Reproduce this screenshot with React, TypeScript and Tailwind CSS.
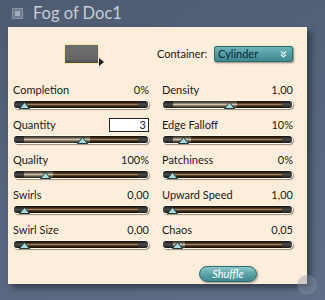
import { useState } from 'react';

type Row = { label: string; value: string; pos: number; fill: number; input?: boolean };

const left: Row[] = [
  { label: 'Completion', value: '0%', pos: 10, fill: 0 },
  { label: 'Quantity', value: '3', pos: 68, fill: 68, input: true },
  { label: 'Quality', value: '100%', pos: 31, fill: 31 },
  { label: 'Swirls', value: '0,00', pos: 10, fill: 0 },
  { label: 'Swirl Size', value: '0,00', pos: 10, fill: 0 },
];

const right: Row[] = [
  { label: 'Density', value: '1,00', pos: 66, fill: 66 },
  { label: 'Edge Falloff', value: '10%', pos: 20, fill: 20 },
  { label: 'Patchiness', value: '0%', pos: 9, fill: 0 },
  { label: 'Upward Speed', value: '1,00', pos: 9, fill: 0 },
  { label: 'Chaos', value: '0,05', pos: 14, fill: 14 },
];

function Slider({ pos, fill }: { pos: number; fill: number }) {
  return (
    <div className="relative mt-[3px] h-[9px] rounded-full border border-[#fffaf0] bg-[linear-gradient(to_bottom,#1a0f06,#3b2714_30%,#9c825f_50%,#3b2714_70%,#140b04)] shadow-[1px_1px_1px_rgba(60,40,20,0.5)]">
      <div
        className="absolute left-[8px] top-0 h-full bg-[linear-gradient(to_bottom,#2a241c,#6f6556_30%,#d2c4aa_50%,#6f6556_70%,#221d16)]"
        style={{ width: fill }}
      />
      <div className="absolute left-0 top-0 h-full w-[10px] rounded-l-full bg-[linear-gradient(to_bottom,#151515,#4a4a4a_50%,#1a1a1a)]" />
      <div className="absolute right-0 top-0 h-full w-[10px] rounded-r-full bg-[linear-gradient(to_bottom,#151515,#4a4a4a_50%,#1a1a1a)]" />
      <svg
        className="absolute top-[1px]"
        style={{ left: pos - 5 }}
        width="11"
        height="7"
        viewBox="0 0 11 7"
      >
        <polygon points="5.5,0.5 10.5,6.5 0.5,6.5" fill="#a8dcdc" stroke="#1d3a40" strokeWidth="1" />
      </svg>
    </div>
  );
}

function Cell({ row }: { row: Row }) {
  return (
    <div className="h-[35px]">
      <div className="flex h-[14px] items-center justify-between">
        <span>{row.label}</span>
        {row.input ? (
          <div className="flex h-[14px] w-[40px] items-center justify-end border border-[#222] bg-white pr-[2px]">
            {row.value}
          </div>
        ) : (
          <span>{row.value}</span>
        )}
      </div>
      <Slider pos={row.pos} fill={row.fill} />
    </div>
  );
}

export default function App() {
  const [container] = useState('Cylinder');

  return (
    <div
      className="relative h-[300px] w-[325px] overflow-hidden bg-[linear-gradient(160deg,#4e5b71,#56657d_50%,#5e6e86)] text-[11px] text-[#1a1a1a]"
      style={{ fontFamily: 'Lato, sans-serif' }}
    >
      <div className="flex h-[27px] items-center pl-[12px]">
        <div className="flex h-[11px] w-[11px] items-center justify-center bg-[#6f7a8c] shadow-[inset_0_0_0_1px_#8a94a4]">
          <div className="h-[5px] w-[5px] bg-[#a3abb8]" />
        </div>
        <span className="ml-[10px] text-[16.5px] leading-none text-[#c9cdd5]">Fog of Doc1</span>
      </div>

      <div className="ml-[8px] h-[257px] w-[299px] bg-[#fdeedb] pl-[5px] pr-[14px] pt-[17px] shadow-[4px_4px_6px_rgba(20,25,35,0.55)]">
        <div className="flex h-[20px] items-center">
          <div className="ml-[51px] flex items-end">
            <div className="h-[20px] w-[35px] border border-[#f4e7a6] bg-[linear-gradient(to_bottom,#6d6d6d,#666_80%,#4a4a4a)]" />
            <svg width="5" height="8" viewBox="0 0 5 8" className="mb-[-2px]">
              <polygon points="0,0 5,4 0,8" fill="#111" />
            </svg>
          </div>
          <span className="ml-[53px]">Container:</span>
          <div className="ml-auto flex h-[16px] w-[79px] items-center justify-between rounded-[2px] border border-[#2f6c72] bg-[linear-gradient(to_bottom,#6fb3b7,#4f9aa0_60%,#3f878d)] pl-[3px] pr-[5px] text-[#0e1f3a] shadow-[1px_1px_2px_rgba(0,0,0,0.45)]">
            <span>{container}</span>
            <svg width="7" height="7" viewBox="0 0 7 7">
              <polyline points="1,0.5 3.5,3 6,0.5" fill="none" stroke="#e8f4f4" strokeWidth="1.2" />
              <polyline points="1,3.5 3.5,6 6,3.5" fill="none" stroke="#e8f4f4" strokeWidth="1.2" />
            </svg>
          </div>
        </div>

        <div className="mt-[19px] grid grid-cols-[136px_131px] gap-x-[13px]">
          <div className="flex flex-col">
            {left.map((r) => (
              <Cell key={r.label} row={r} />
            ))}
          </div>
          <div className="flex flex-col">
            {right.map((r) => (
              <Cell key={r.label} row={r} />
            ))}
          </div>
        </div>

        <div className="mt-[8px] flex pl-[186px]">
          <button className="flex h-[16px] w-[58px] items-center justify-center rounded-[8px] border border-[#2c6a70] bg-[linear-gradient(to_bottom,#8cc6c9,#5aa3a8_50%,#3f8a90)] text-[11px] italic text-white shadow-[1px_1px_2px_rgba(0,0,0,0.4)]">
            Shuffle
          </button>
        </div>
      </div>

      <div className="absolute left-[297px] top-[275px] h-[20px] w-[20px] rounded-full bg-[#8a93a3]/40" />
    </div>
  );
}
